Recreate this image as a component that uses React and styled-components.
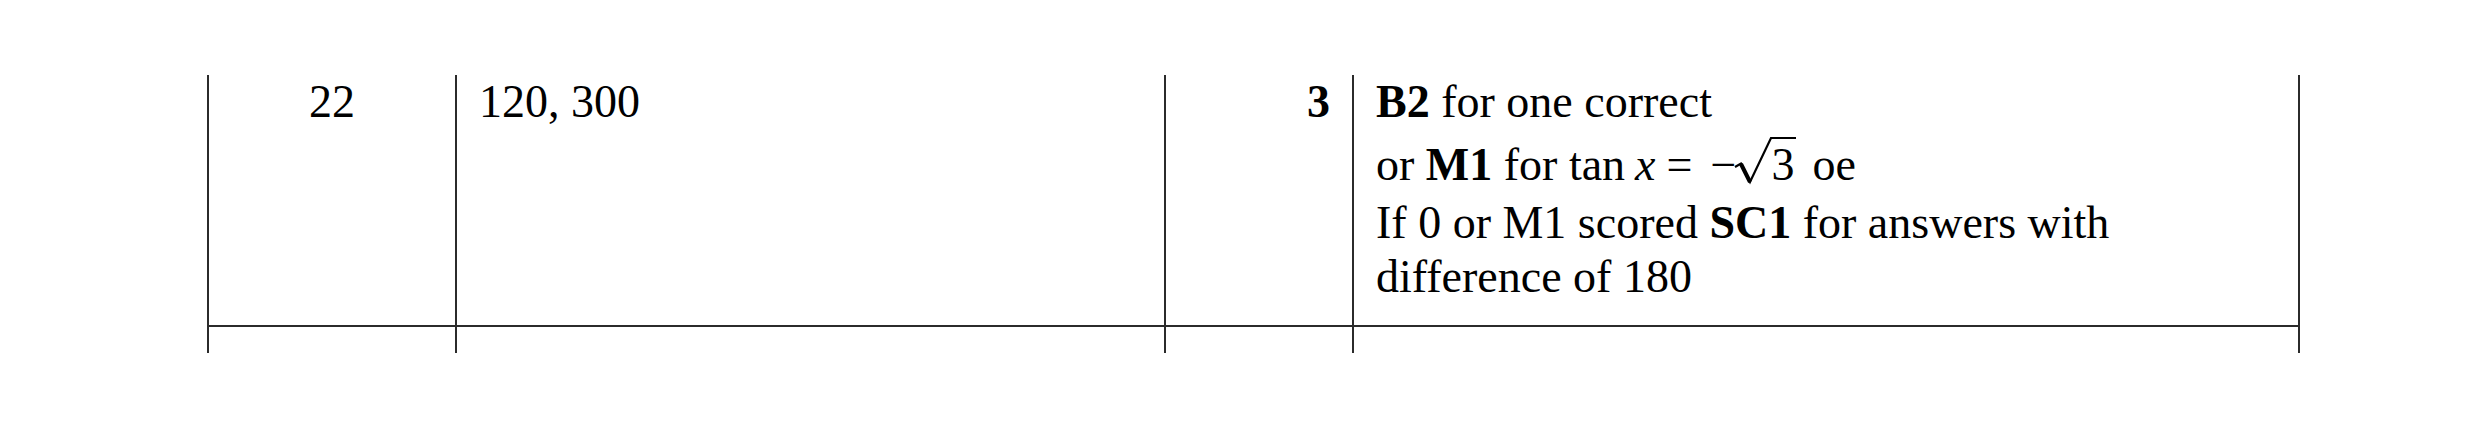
import styled, { createGlobalStyle } from 'styled-components'

const GlobalStyle = createGlobalStyle`
    html, body {
        margin: 0;
        padding: 0;
        background: #fff;
    }
    body {
        font-family: "Liberation Serif", "Times New Roman", serif;
        color: #000;
    }
`

const rule = '2px solid #2b2b2b'

const Page = styled.div`
    width: 2481px;
    height: 428px;
    padding: 75px 0 0 207px;
    box-sizing: border-box;
`
const Row = styled.div`
    display: grid;
    grid-template-columns: 248px 709px 188px 948px;
    height: ${props => props.height}px;
    border-bottom: ${props => props.ruled ? rule : 'none'};
    box-sizing: content-box;
    width: 2093px;
`
const Cell = styled.div`
    box-sizing: border-box;
    border-left: ${rule};
    border-right: ${props => props.last ? rule : 'none'};
    padding: 0 22px;
    font-size: 46px;
    line-height: 54px;
    text-align: ${props => props.align || 'left'};
    font-weight: ${props => props.bold ? 700 : 400};
`
const Line = styled.div`
    margin-top: ${props => props.gap || 0}px;
    white-space: nowrap;
`
const Mark = styled.b`
    font-weight: 700;
`
const Var = styled.i`
    font-style: italic;
    margin-left: 10px;
`
const Eq = styled.span`
    margin: 0 18px 0 11px;
`
const Sqrt = styled.span`
    position: relative;
    padding-left: 36px;
    margin-left: -1px;
    margin-right: 16px;
`
const Radicand = styled.span`
    border-top: 2px solid #000;
    padding-right: 2px;
`
const RadicalSign = styled.svg`
    position: absolute;
    left: -2px;
    top: -2px;
    width: 40px;
    height: 48px;
    overflow: visible;
`

const Root3 = () => (
    <Sqrt>
        <RadicalSign viewBox="0 0 40 48">
            <path d="M2 30 L8 26.5 L17 45 L38 1 L40 1" fill="none" stroke="#000" strokeWidth="2.2" strokeLinejoin="miter" />
            <path d="M8 27 L17 45" fill="none" stroke="#000" strokeWidth="4" />
        </RadicalSign>
        <Radicand>3</Radicand>
    </Sqrt>
)

export default function App() {
    return (
        <>
            <GlobalStyle />
            <Page>
                <Row height={250} ruled>
                    <Cell align="center">22</Cell>
                    <Cell>120, 300</Cell>
                    <Cell align="right" bold>3</Cell>
                    <Cell last>
                        <Line><Mark>B2</Mark> for one correct</Line>
                        <Line gap={9}>
                            or <Mark>M1</Mark> for tan<Var>x</Var><Eq>=</Eq>−<Root3 />oe
                        </Line>
                        <Line gap={4}>If 0 or M1 scored <Mark>SC1</Mark> for answers with</Line>
                        <Line>difference of 180</Line>
                    </Cell>
                </Row>
                <Row height={26}>
                    <Cell />
                    <Cell />
                    <Cell />
                    <Cell last />
                </Row>
            </Page>
        </>
    )
}
